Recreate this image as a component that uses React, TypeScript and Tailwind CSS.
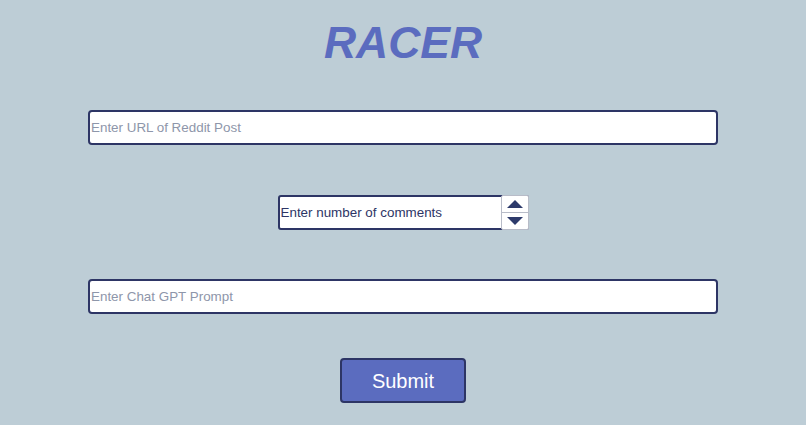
import React from "react";

export default function App() {
  return (
    <div
      className="w-[806px] h-[425px] bg-[#bdcdd6] flex flex-col items-center overflow-hidden"
      style={{ fontFamily: '"Liberation Sans", Arial, sans-serif' }}
    >
      <h1 className="mt-[21px] h-[44px] text-[44.5px] leading-none font-bold italic text-[#5b6cbf]">
        RACER
      </h1>
      <input
        type="text"
        placeholder="Enter URL of Reddit Post"
        className="mt-[45px] w-[630px] h-[35px] bg-white border-2 border-[#2d3565] rounded-[4px] px-[1px] text-[13.4px] text-[#2d3565] placeholder:text-[#8e96aa] outline-none"
      />
      <div className="mt-[50px] w-[251px] h-[35px] flex bg-white border-2 border-[#2d3565] rounded-[3px] relative">
        <input
          type="text"
          placeholder="Enter number of comments"
          className="flex-1 min-w-0 h-full bg-transparent px-[1px] text-[13.4px] text-[#2d3565] placeholder:text-[#2d3565] outline-none"
        />
        <div className="absolute right-[-2px] top-[-2px] w-[28px] h-[35px] bg-white border border-[#b8bcc8] rounded-[2px] flex flex-col">
          <div className="flex-1 flex items-center justify-center border-b border-[#b8bcc8]">
            <svg width="16" height="8" viewBox="0 0 16 8">
              <polygon points="0,8 16,8 8,0" fill="#2d3a6b" />
            </svg>
          </div>
          <div className="flex-1 flex items-center justify-center">
            <svg width="16" height="8" viewBox="0 0 16 8">
              <polygon points="0,0 16,0 8,8" fill="#2d3a6b" />
            </svg>
          </div>
        </div>
      </div>
      <input
        type="text"
        placeholder="Enter Chat GPT Prompt"
        className="mt-[49px] w-[630px] h-[35px] bg-white border-2 border-[#2d3565] rounded-[4px] px-[1px] text-[13.4px] text-[#2d3565] placeholder:text-[#8e96aa] outline-none"
      />
      <button className="mt-[44px] w-[126px] h-[45px] bg-[#5b6cbf] border-2 border-[#2d3565] rounded-[4px] text-white text-[20px]">
        Submit
      </button>
    </div>
  );
}
